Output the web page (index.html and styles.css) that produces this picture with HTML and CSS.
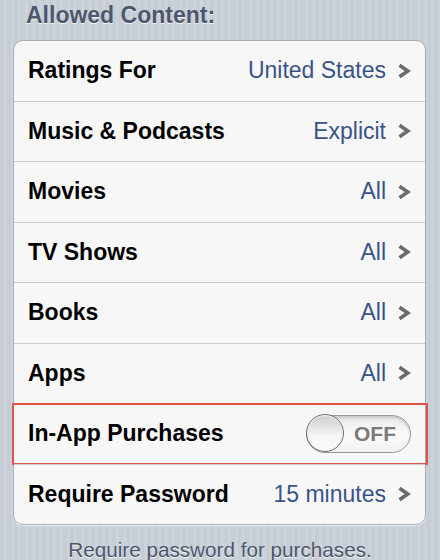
FILE: index.html
```html
<!DOCTYPE html>
<html lang="en">

<head>
    <meta charset="UTF-8">
    <meta name="viewport" content="width=device-width, initial-scale=1.0">
    <title>Allowed Content</title>
    <link rel="stylesheet" href="styles.css">
</head>

<body>
    <div id="page">
        <h2 class="group-title">Allowed Content:</h2>
        <ul class="group">
            <li class="row">
                <span class="label">Ratings For</span>
                <span class="value">United States</span>
                <svg class="chevron" width="14" height="16" viewBox="0 0 14 16"><path d="M2.5 2.2 L10.8 8 L2.5 13.8" /></svg>
            </li>
            <li class="row">
                <span class="label">Music &amp; Podcasts</span>
                <span class="value">Explicit</span>
                <svg class="chevron" width="14" height="16" viewBox="0 0 14 16"><path d="M2.5 2.2 L10.8 8 L2.5 13.8" /></svg>
            </li>
            <li class="row">
                <span class="label">Movies</span>
                <span class="value">All</span>
                <svg class="chevron" width="14" height="16" viewBox="0 0 14 16"><path d="M2.5 2.2 L10.8 8 L2.5 13.8" /></svg>
            </li>
            <li class="row">
                <span class="label">TV Shows</span>
                <span class="value">All</span>
                <svg class="chevron" width="14" height="16" viewBox="0 0 14 16"><path d="M2.5 2.2 L10.8 8 L2.5 13.8" /></svg>
            </li>
            <li class="row">
                <span class="label">Books</span>
                <span class="value">All</span>
                <svg class="chevron" width="14" height="16" viewBox="0 0 14 16"><path d="M2.5 2.2 L10.8 8 L2.5 13.8" /></svg>
            </li>
            <li class="row">
                <span class="label">Apps</span>
                <span class="value">All</span>
                <svg class="chevron" width="14" height="16" viewBox="0 0 14 16"><path d="M2.5 2.2 L10.8 8 L2.5 13.8" /></svg>
            </li>
            <li class="row highlighted">
                <span class="label">In-App Purchases</span>
                <div class="switch">
                    <span class="knob"></span>
                    <span class="switch-text">OFF</span>
                </div>
            </li>
            <li class="row">
                <span class="label">Require Password</span>
                <span class="value">15 minutes</span>
                <svg class="chevron" width="14" height="16" viewBox="0 0 14 16"><path d="M2.5 2.2 L10.8 8 L2.5 13.8" /></svg>
            </li>
        </ul>
        <p class="group-footer">Require password for purchases.</p>
    </div>
</body>

</html>
```

FILE: styles.css
```css
* {
    margin: 0;
    padding: 0;
    box-sizing: border-box;
    font-family: "Liberation Sans", Arial, sans-serif;
}

body {
    background-color: #c8cfd6;
}

#page {
    width: 440px;
    height: 560px;
    overflow: hidden;
    background-image: repeating-linear-gradient(90deg, #c6cdd5 0, #c6cdd5 4px, #ccd3da 4px, #ccd3da 7px);
}

.group-title {
    padding: 1px 0 0 26px;
    height: 40px;
    font-size: 23px;
    line-height: 28px;
    font-weight: bold;
    color: #4c566c;
    text-shadow: 0 1px 0 rgba(255, 255, 255, 0.8);
}

.group {
    list-style-type: none;
    margin: 0 14px 0 13px;
    background-color: #f7f7f7;
    border: 1px solid #a8abb0;
    border-radius: 10px;
    box-shadow: 0 1px 0 rgba(255, 255, 255, 0.7);
}

.row {
    position: relative;
    display: flex;
    align-items: center;
    height: 60.5px;
    padding: 0 14px 0 14px;
    border-top: 1px solid #cbcbcb;
}

.row:first-child {
    border-top: none;
    height: 59.5px;
}

.label {
    flex: 1;
    font-size: 23px;
    font-weight: bold;
    color: #000;
}

.value {
    font-size: 23px;
    color: #385487;
    margin-right: 11px;
}

.chevron path {
    fill: none;
    stroke: #6b6b6b;
    stroke-width: 3.6;
}

/* red box drawn over the in-app row */
.highlighted::after {
    content: "";
    position: absolute;
    top: -1px;
    left: -2px;
    right: -3px;
    bottom: -1px;
    border: 2px solid #e0544e;
}

.switch {
    display: flex;
    align-items: center;
    width: 105px;
    height: 38px;
    margin-right: 0;
    border: 1px solid #9a9a9a;
    border-radius: 19px;
    background: linear-gradient(#e9e9e9, #fbfbfb 50%, #f1f1f1);
    box-shadow: inset 0 2px 3px rgba(0, 0, 0, 0.15);
}

.knob {
    width: 38px;
    height: 38px;
    margin: -1px 0 0 -1px;
    border: 1px solid #707070;
    border-radius: 50%;
    background: linear-gradient(#cdcdcd, #f6f6f6 60%, #fafafa);
    box-shadow: inset 0 1px 1px rgba(255, 255, 255, 0.9);
}

.switch-text {
    flex: 1;
    text-align: center;
    font-size: 21px;
    font-weight: bold;
    color: #7a7a7a;
    padding-right: 4px;
}

.group-footer {
    margin-top: 13px;
    text-align: center;
    font-size: 20.7px;
    color: #4c566c;
    text-shadow: 0 1px 0 rgba(255, 255, 255, 0.8);
}
```
